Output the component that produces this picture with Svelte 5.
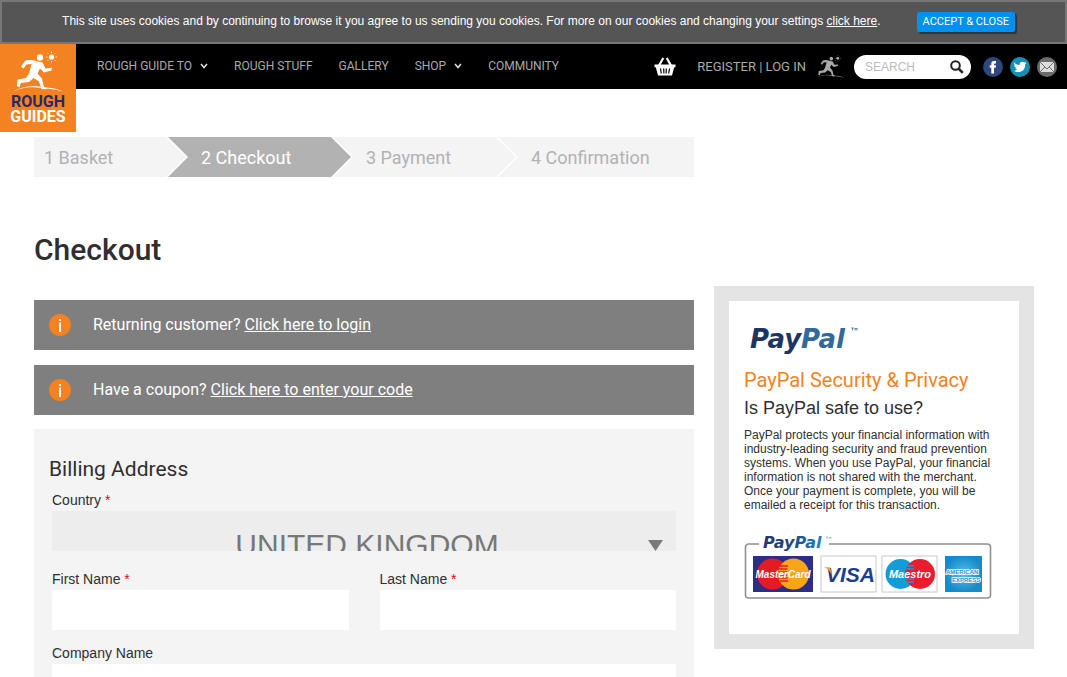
<script>
  const menu = [
    { label: 'ROUGH GUIDE TO', sub: true },
    { label: 'ROUGH STUFF' },
    { label: 'GALLERY' },
    { label: 'SHOP', sub: true },
    { label: 'COMMUNITY' }
  ];
  const steps = ['1 Basket', '2 Checkout', '3 Payment', '4 Confirmation'];
  const notices = [
    { text: 'Returning customer?', link: 'Click here to login' },
    { text: 'Have a coupon?', link: 'Click here to enter your code' }
  ];
  let country = $state('UK');
</script>

{#snippet runner()}
  <circle cx="24" cy="4.500" r="3.200" />
  <path d="M21 8.200 C16 6.500 11 6.500 9 8 L5 13.500 L7.500 15.500 L10.500 11.500 L15.500 11 L13 20.500 L10 25 L1.500 26.500 L.8 33 L3.500 34.200 L4.800 30 L13 29 L17.500 25 L23 28.500 L25.500 36 L31 36.300 L27.800 33.500 L26 25.500 L21.500 20.500 L24 15.500 L28 19.500 L35.500 17.500 L36 14.800 L29.500 15.500 L26.500 9.500 Z" />
  <circle cx="35.500" cy="4" r="2.600" />
  <path d="M35.500-1.500v1.500M35.500 8v1.500M30 4h1.500M39.500 4H41M31.600.1l1 1M38.400 6.900l1 1M39.400.1l-1 1M32.600 6.900l-1 1" fill="none" stroke="currentColor" stroke-width=".8" />
  <path d="M-3 38.500 C9 32 20 33 27 34 S42 35.500 47 38.500 C37 35.800 28 35.300 21 34.500 S7 34 -3 38.500Z" />
{/snippet}

<div class="cookies" role="region" aria-label="Cookies">
  <p>This site uses cookies and by continuing to browse it you agree to us sending you cookies. For more on our cookies and changing your settings <a href="#cookies">click here</a>.</p>
  <button type="button">ACCEPT &amp; CLOSE</button>
</div>

<header>
  <a class="logo" href="#home" aria-label="Rough Guides">
    <svg viewBox="0 0 76 88" width="76" height="88">
      <g transform="translate(16 9)" fill="#fff" color="#fff">{@render runner()}</g>
      <text x="38" y="63" text-anchor="middle" fill="#25286b">ROUGH</text>
      <text x="38" y="78" text-anchor="middle" fill="#fff">GUIDES</text>
    </svg>
  </a>
  <nav>
    {#each menu as item}
      <a href="#menu">{item.label}{#if item.sub}<svg width="8" height="6" viewBox="0 0 8 6" aria-hidden="true"><path d="M1 1l3 3.500L7 1" fill="none" stroke="#ddd" stroke-width="1.600" /></svg>{/if}</a>
    {/each}
  </nav>
  <div class="tools">
    <a class="basket" href="#basket" aria-label="Basket">
      <svg width="22" height="19" viewBox="0 0 22 19" fill="#fff">
        <path d="M.5 7.500h21v2.800h-1.300L18 18.500H4L1.800 10.300H.5z" />
        <path d="M5 8.500L9.300 1M17 8.500L12.700 1" stroke="#fff" stroke-width="2.200" />
        <path d="M6.500 11.500l.8 5M9.700 11.500l.2 5M12.300 11.500l-.2 5M15.500 11.500l-.8 5" stroke="#000" stroke-width="1.200" />
      </svg>
    </a>
    <span class="account"><a href="#register">REGISTER</a> | <a href="#login">LOG IN</a></span>
    <svg class="mini" width="29" height="23" viewBox="-3 -2 51 41" fill="#aaa" color="#aaa" aria-hidden="true">{@render runner()}</svg>
    <form class="search">
      <input type="search" placeholder="SEARCH" aria-label="Search" />
      <button type="button" aria-label="Go">
        <svg width="14" height="14" viewBox="0 0 14 14" fill="none" stroke="#222" stroke-width="2"><circle cx="5.500" cy="5.500" r="4.300" /><path d="M8.800 8.800l4 4" stroke-width="2.600" /></svg>
      </button>
    </form>
    <div class="social">
      <a href="#facebook" aria-label="Facebook">
        <svg width="20" height="20" viewBox="0 0 20 20"><circle cx="10" cy="10" r="10" fill="#2f477a" /><path d="M8.300 16.500v-5.800H6.700V8.300h1.600V6.800C8.300 4.700 9.400 4 11 4h2v2.400h-1.200c-.6 0-.8.3-.8.8v1.100h2l-.3 2.400H11v5.800z" fill="#fff" /></svg>
      </a>
      <a href="#twitter" aria-label="Twitter">
        <svg width="20" height="20" viewBox="0 0 20 20"><circle cx="10" cy="10" r="10" fill="#158fb5" /><path d="M4 5.200c1.600 1.900 3.500 2.800 5.700 2.900C9.300 6.200 10.600 4.700 12.300 4.700c.9 0 1.500.3 2 .9l1.800-.7-1 1.500 1.500-.3-1.500 1.600c.1 4.500-3 7.300-6.600 7.300-1.700 0-3.400-.4-4.600-1.300 1.500.1 2.800-.3 3.800-1.100-1.300-.1-2.100-.8-2.500-1.900h1.100C5 10.300 4.200 9.400 4.200 8l1.100.3C4.200 7.400 3.600 6.500 4 5.200z" fill="#fff" /></svg>
      </a>
      <a href="#mail" aria-label="Email">
        <svg width="20" height="20" viewBox="0 0 20 20"><circle cx="10" cy="10" r="10" fill="#6c6c6c" /><path d="M3 5h14v10H3z" fill="#ddd" /><path d="M3 5l7 7 7-7M3 15l4.800-5M17 15l-4.800-5" fill="none" stroke="#6c6c6c" stroke-width="1" /></svg>
      </a>
    </div>
  </div>
</header>

<main>
  <div class="content">
    <ol class="steps">
      {#each steps as step, i}
        <li class:current={i === 1}>{step}</li>
      {/each}
    </ol>
    <h1>Checkout</h1>
    <div class="notices">
      {#each notices as n}
        <p>
          <svg width="22" height="22" viewBox="0 0 22 22" aria-hidden="true"><circle cx="11" cy="11" r="11" fill="#f58220" /><path d="M10 5h2v2h-2zM10 8.500h2V18h-2z" fill="#fff" /></svg>
          <span>{n.text} <a href="#notice">{n.link}</a></span>
        </p>
      {/each}
    </div>
    <form class="billing">
      <h2>Billing Address</h2>
      <div class="fields">
        <div class="field wide country">
          <label for="country">Country <b>*</b></label>
          <div class="picker">
            <select id="country" bind:value={country}>
              <option value="UK">UNITED KINGDOM</option>
            </select>
            <svg width="15" height="11" viewBox="0 0 15 11" aria-hidden="true"><path d="M0 0h15L7.500 11z" fill="#777b7b" /></svg>
          </div>
        </div>
        <div class="field">
          <label for="first">First Name <b>*</b></label>
          <input id="first" type="text" />
        </div>
        <div class="field">
          <label for="last">Last Name <b>*</b></label>
          <input id="last" type="text" />
        </div>
        <div class="field wide">
          <label for="company">Company Name</label>
          <input id="company" type="text" />
        </div>
      </div>
    </form>
  </div>

  <aside>
    <svg class="paypal" width="110" height="34" viewBox="0 0 110 34" role="img" aria-label="PayPal">
      <text x="0" y="23" font-size="26"><tspan fill="#1c3664">Pay</tspan><tspan fill="#32699c">Pal</tspan></text>
      <path d="M101 3h3M102.500 3v2.500M105 5.500V3l1 1.500L107 3v2.500" fill="none" stroke="#32699c" stroke-width=".7" />
    </svg>
    <h2>PayPal Security &amp; Privacy</h2>
    <h3>Is PayPal safe to use?</h3>
    <p>PayPal protects your financial information with industry-leading security and fraud prevention systems. When you use PayPal, your financial information is not shared with the merchant. Once your payment is complete, you will be emailed a receipt for this transaction.</p>
    <svg class="cards" width="248" height="68" viewBox="0 -2 248 68" role="img" aria-label="Accepted cards">
      <defs>
        <linearGradient id="pp" x1="0" x2="1"><stop offset="0" stop-color="#213a70" /><stop offset=".5" stop-color="#20477f" /><stop offset="1" stop-color="#1587c9" /></linearGradient>
        <radialGradient id="ax"><stop offset="0" stop-color="#55c1ea" /><stop offset="1" stop-color="#168bca" /></radialGradient>
      </defs>
      <path d="M15 11H5Q1.500 11 1.500 14V62Q1.500 65 5 65H243Q246.500 65 246.500 62V14Q246.500 11 243 11H85" fill="none" stroke="#8d8f92" stroke-width="1.600" />
      <text x="19" y="15" font-size="16" fill="url(#pp)">PayPal</text>
      <path d="M82 4h2M83 4v2M85 6V4l1 1 1-1v2" fill="none" stroke="#6a9fca" stroke-width=".5" />

      <rect x="9" y="23" width="60" height="36" fill="#2b2e83" />
      <circle cx="28.500" cy="41" r="15.500" fill="#e31b23" />
      <circle cx="49.500" cy="41" r="15.500" fill="#f9a51a" />
      <path d="M36 33h8M34.500 36h9M34 39h9M34 42h9M34.500 45h9M36 48h8" stroke="#e31b23" stroke-width="1.300" />
      <text class="brand" x="39" y="45" text-anchor="middle" font-size="10" fill="#fff">MasterCard</text>

      <rect x="77" y="23" width="55" height="36" fill="#fff" stroke="#c8c8c8" />
      <text class="brand" x="82" y="49" font-size="21" fill="#1d3e8d">VISA</text>
      <path d="M80 34.200h6l2 8C86 38 84 35.500 80 34.200z" fill="#f4a51c" />

      <rect x="138" y="23" width="55" height="36" fill="#fff" stroke="#c8c8c8" />
      <circle cx="156.500" cy="41" r="15" fill="#139cd8" />
      <circle cx="176" cy="41" r="15" fill="#ec1c2d" />
      <path d="M162 33h8M161 36h9M161 46h9M162 49h8" stroke="#139cd8" stroke-width="1.300" />
      <text class="brand" x="166" y="45" text-anchor="middle" font-size="11" fill="#fff">Maestro</text>

      <rect x="201" y="23" width="37" height="36" fill="url(#ax)" />
      <g class="amex" fill="#2795cc" stroke="#fff" stroke-width="1.600" paint-order="stroke"><text x="202" y="41" font-size="6">AMERICAN</text><text x="208" y="49" font-size="6">EXPRESS</text></g>
    </svg>
  </aside>
</main>

<style>
  :global(body) {
    margin: 0;
    background: #fff;
    color: #2f2f2f;
    font-family: "Liberation Sans", Arial, sans-serif;
  }
  h1, h2, h3, p, ol { margin: 0; padding: 0; }
  svg { display: block; flex: none; }
  a { color: inherit; }
  button, input, select { font: inherit; border: 0; border-radius: 0; margin: 0; box-sizing: border-box; }

  .cookies {
    display: flex;
    align-items: center;
    justify-content: center;
    gap: 36px;
    height: 44px;
    box-sizing: border-box;
    padding-left: 10px;
    background: #555;
    border: 2px solid #777;
    color: #fff;
    font-size: 12px;
    line-height: 16px;
  }
  .cookies p { padding-bottom: 2px; }
  .cookies button {
    height: 20px;
    padding: 0 6px;
    border-radius: 2px;
    background: #0090ee;
    color: #fff;
    box-shadow: 2px 2px 1px #333;
    font: 11px/20px Roboto, sans-serif;
    white-space: nowrap;
  }

  header {
    display: flex;
    align-items: center;
    justify-content: space-between;
    height: 45px;
    padding-right: 10px;
    background: #000;
    color: #aaa;
    font: 12px/20px Roboto, sans-serif;
  }
  header a { text-decoration: none; white-space: nowrap; }
  .logo { align-self: flex-start; background: #f58220; z-index: 1; }
  .logo text { font: 700 16px Roboto, sans-serif; }
  nav { display: flex; gap: 26px; flex: 1; padding: 0 0 2px 21px; }
  nav a { display: flex; align-items: center; gap: 8px; }
  .tools { display: flex; align-items: center; }
  .account { padding: 0 10px 0 21px; white-space: nowrap; font-size: 13px; }
  .search {
    display: flex;
    align-items: center;
    width: 117px;
    height: 24px;
    box-sizing: border-box;
    margin: 0 12px 0 9px;
    padding: 0 7px 0 11px;
    border-radius: 12px;
    background: #fff;
  }
  .search input {
    flex: 1;
    min-width: 0;
    padding: 0;
    background: none;
    font: 12px/20px "Liberation Sans", Arial, sans-serif;
  }
  .search input::placeholder { color: #bbb; }
  .search button { padding: 0; background: none; }
  .social { display: flex; gap: 7px; }

  main {
    display: grid;
    grid-template-columns: 33fr 16fr;
    gap: 20px;
    padding: 48px 33px 40px 34px;
  }
  .content { min-width: 0; }

  .steps { display: flex; list-style: none; font: 18px/42px Roboto, sans-serif; color: #b2b2b2; }
  .steps li {
    flex: 0 0 calc(25% + 18px);
    height: 40px;
    margin-left: -18px;
    padding-left: 33px;
    box-sizing: border-box;
    background: #f4f4f4;
    clip-path: polygon(0 0, calc(100% - 20px) 0, 100% 50%, calc(100% - 20px) 100%, 0 100%, 20px 50%);
  }
  .steps li:first-child {
    flex-basis: calc(25% - 13px);
    margin-left: 0;
    padding-left: 10px;
    clip-path: polygon(0 0, calc(100% - 20px) 0, 100% 50%, calc(100% - 20px) 100%, 0 100%);
  }
  .steps li:last-child {
    flex: 1;
    clip-path: polygon(0 0, 100% 0, 100% 100%, 0 100%, 20px 50%);
  }
  .steps .current { background: #b2b2b2; color: #fff; }

  h1 { margin: 53px 0 30px; font: 500 30px/40px Roboto, sans-serif; }

  .notices { display: grid; gap: 15px; margin-bottom: 14px; }
  .notices p {
    display: flex;
    align-items: center;
    gap: 22px;
    height: 50px;
    padding-left: 15px;
    background: #7f7f7f;
    color: #fff;
    font: 16px/50px Roboto, sans-serif;
  }

  .billing { padding: 25px 15px 40px; background: #f4f4f4; }
  .billing h2 { font: 21px/30px Roboto, sans-serif; }
  .fields { display: grid; grid-template-columns: 1fr 1fr; gap: 13px 31px; padding: 6px 3px 0; }
  .wide { grid-column: 1 / -1; }
  .country { padding-bottom: 5px; }
  .field label { display: block; font-size: 14px; line-height: 21px; }
  .field b { color: #f00; font-weight: 400; }
  .field input { display: block; width: 100%; height: 40px; padding: 0 10px; background: #fff; }
  .picker { position: relative; height: 40px; overflow: hidden; background: #ededed; }
  .picker select {
    display: block;
    width: 100%;
    height: 66px;
    padding: 0 0 0 6px;
    appearance: none;
    background: none;
    color: #777;
    font-size: 30px;
    text-align: center;
    text-align-last: center;
  }
  .picker svg { position: absolute; right: 13px; bottom: 0; pointer-events: none; }

  aside {
    align-self: start;
    margin-top: 149px;
    padding: 24px 15px 35px;
    border: 15px solid #e4e4e4;
  }
  .paypal { margin-left: 6px; overflow: visible; }
  .paypal text, .cards text { font-family: "DejaVu Sans", sans-serif; font-weight: 700; font-style: italic; }
  .cards { overflow: visible; }
  .cards .brand { font-family: "Liberation Sans", Arial, sans-serif; }
  .cards .amex text { font-family: "Liberation Sans", Arial, sans-serif; font-style: normal; }
  aside h2 { margin-top: 6px; color: #f58220; font: 20px/30px Roboto, sans-serif; }
  aside h3 { font-size: 18px; font-weight: 400; line-height: 27px; }
  aside p { margin: 6px 0 19px; font-size: 12px; line-height: 14px; }
</style>
